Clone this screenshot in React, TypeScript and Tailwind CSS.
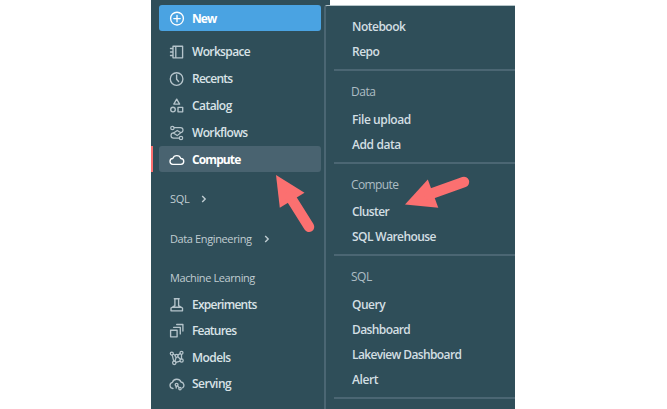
import type { ReactNode } from "react";

function Icon({ children, className = "text-[#b5c4cb]" }: { children: ReactNode; className?: string }) {
  return (
    <svg
      viewBox="0 0 16 16"
      fill="none"
      stroke="currentColor"
      strokeWidth="1.35"
      strokeLinejoin="round"
      strokeLinecap="round"
      className={`size-4 shrink-0 ${className}`}
    >
      {children}
    </svg>
  );
}

const icons: Record<string, ReactNode> = {
  workspace: <path d="M4 2.2h9.6v11.6H4zM6.8 2.2v11.6M1.5 4.5H4M1.5 8H4M1.5 11.5H4" />,
  recents: (
    <>
      <circle cx="7.6" cy="8" r="6.3" />
      <path d="M7.6 4v4.2l2 2.3" />
    </>
  ),
  catalog: (
    <>
      <path d="M7.7 1.2l2.9 4.9H4.8zM9 9.3h4.7v4.5H9z" />
      <circle cx="4" cy="11.5" r="2.3" />
    </>
  ),
  workflows: (
    <g strokeWidth="1.2">
      <circle cx="3.4" cy="3" r="1.7" />
      <circle cx="12" cy="13" r="1.7" />
      <path d="M5.1 2.6h6.4a2.5 2.5 0 010 5L8.2 5.4 4.6 7.9a2.6 2.6 0 000 5.2h5.6M4.4 8l3.8 2.6 3.6-2.9" />
    </g>
  ),
  experiments: <path d="M5.3 1.7h4.9M5.9 1.7v7L2 11v2.800h11.500V11L9.600 8.700v-7M3.800 10.200h7.900" />,
  features: <path d="M1.6 7.2h6.5v6.600H1.600zM4.600 4.300h6.700v6.600M7.700 1.500h6.200v6.600" />,
  models: (
    <g strokeWidth="1.25">
      <circle cx="2.8" cy="3.600" r="1.500" />
      <circle cx="12.500" cy="2.800" r="1.500" />
      <circle cx="7.600" cy="5.800" r="1.500" />
      <circle cx="12.600" cy="10.500" r="1.600" />
      <circle cx="5.300" cy="12.800" r="1.700" />
      <path d="M4.300 4.300l1.800.9M8.900 5l2.300-1.400M3.200 5l1.500 6.200M7.200 7.300l-1.300 3.900M8.800 6.800l2.600 2.500M12.500 4.300v4.600M7 12.300l4.100-1.200" />
    </g>
  ),
  serving: (
    <>
      <path d="M4 12.500a3.100 3.100 0 01-.6-6.100A4.600 4.600 0 0112 6a3.300 3.300 0 011.700 5.800" />
      <circle cx="7.600" cy="8.800" r="1.400" />
      <circle cx="11" cy="12.600" r="1.200" />
      <path d="M8.600 9.900l1.500 1.700M7.200 10.300v1.700" />
    </>
  ),
};

function NavRow({ icon, label, tracking }: { icon: string; label: string; tracking: string }) {
  return (
    <div className="flex h-[27px] items-center gap-[7px] pl-[18px] text-[#d9e3e7]">
      <Icon>{icons[icon]}</Icon>
      <span className={`font-semibold ${tracking}`}>{label}</span>
    </div>
  );
}

function Chevron() {
  return (
    <svg viewBox="0 0 6 8" className="h-2 w-1.5" fill="none" stroke="#c0cdd2" strokeWidth="1.4">
      <path d="M1.2 1l3 3-3 3" />
    </svg>
  );
}

function MenuItem({ label, tracking }: { label: string; tracking: string }) {
  return <div className={`h-[25px] pl-[18px] font-semibold leading-[25px] text-[#d3dfe3] ${tracking}`}>{label}</div>;
}

function MenuHeading({ label, tracking }: { label: string; tracking: string }) {
  return <div className={`h-[26px] pl-[17px] leading-[26px] text-[#adbdc4] ${tracking}`}>{label}</div>;
}

function Divider() {
  return <div className="h-0.5 bg-[#4b6673]" />;
}

export default function App() {
  return (
    <div className="relative h-[409px] w-[667px] overflow-hidden bg-white font-['Open_Sans','Noto_Sans',sans-serif] text-[12px] whitespace-nowrap">
      <div className="flex h-full pl-[151px]">
        <nav className="h-full w-[173px] bg-[#2f4e59] pt-[5px]">
          <div className="ml-2 flex h-[26px] w-[162px] items-center gap-[7px] rounded-[3px] bg-[#4aa3e2] pt-px pl-2.5 text-white">
            <Icon className="text-white">
              <circle cx="8" cy="7.6" r="6.4" />
              <path d="M8 4.400v6.400M4.800 7.600h6.400" />
            </Icon>
            <span className="font-bold tracking-[-0.9px]">New</span>
          </div>
          <div className="pt-[7px]">
            <NavRow icon="workspace" label="Workspace" tracking="tracking-[-0.65px]" />
            <NavRow icon="recents" label="Recents" tracking="tracking-[-0.75px]" />
            <NavRow icon="catalog" label="Catalog" tracking="tracking-[-0.55px]" />
            <NavRow icon="workflows" label="Workflows" tracking="tracking-[-0.65px]" />
          </div>
          <div className="flex h-[26px]">
            <div className="mr-1.5 w-0.5 bg-[#fb7070]" />
            <div className="flex w-[162px] items-center gap-[7px] rounded-[3px] bg-[#496370] pt-px pl-2.5 text-white">
              <Icon className="text-white">
                <path d="M4 12.300a2.900 2.900 0 01-.2-5.800 4.200 4.200 0 018 0 2.900 2.900 0 01.1 5.800z" />
              </Icon>
              <span className="font-bold tracking-[-0.9px]">Compute</span>
            </div>
          </div>
          <div className="mt-[17px] flex h-5 items-center gap-3 pl-[19px] text-[11px] text-[#c0cdd2]">
            <span className="tracking-[-0.3px]">SQL</span>
            <Chevron />
          </div>
          <div className="mt-5 flex h-5 items-center gap-3 pl-[19px] text-[11px] text-[#c0cdd2]">
            <span className="tracking-[-0.38px]">Data Engineering</span>
            <Chevron />
          </div>
          <div className="mt-[19px] flex h-5 items-center pl-[19px] text-[11px] text-[#c0cdd2]">
            <span className="tracking-[-0.4px]">Machine Learning</span>
          </div>
          <div className="mt-[3px] flex flex-col -space-y-[0.4px]">
            <NavRow icon="experiments" label="Experiments" tracking="tracking-[-0.75px]" />
            <NavRow icon="features" label="Features" tracking="tracking-[-0.8px]" />
            <NavRow icon="models" label="Models" tracking="tracking-[-0.55px]" />
            <NavRow icon="serving" label="Serving" tracking="tracking-[-0.5px]" />
          </div>
        </nav>
        <div className="flex h-full w-[191px] flex-col">
          <div className="h-[5px] w-[5.5px] shrink-0 bg-[#2f4e59]" />
          <div className="bg-[#2f4e59]">
            <section className="h-[404px] rounded-tl-[3px] border-t border-l-2 border-t-[#b7c6ca] border-l-[#4b6673] bg-[#2f4e59] pl-2">
              <div className="pt-2 pb-[5px]">
                <MenuItem label="Notebook" tracking="tracking-[-0.5px]" />
                <MenuItem label="Repo" tracking="tracking-[-0.5px]" />
              </div>
              <Divider />
              <div className="pt-2 pb-[5px]">
                <MenuHeading label="Data" tracking="tracking-[-0.5px]" />
                <div className="h-0.5" />
                <MenuItem label="File upload" tracking="tracking-[-0.4px]" />
                <MenuItem label="Add data" tracking="tracking-[-0.4px]" />
              </div>
              <Divider />
              <div className="pt-2 pb-[5px]">
                <MenuHeading label="Compute" tracking="tracking-[-0.6px]" />
                <div className="h-px" />
                <MenuItem label="Cluster" tracking="tracking-[-0.6px]" />
                <MenuItem label="SQL Warehouse" tracking="tracking-[-0.58px]" />
              </div>
              <Divider />
              <div className="pt-2 pb-[5px]">
                <MenuHeading label="SQL" tracking="tracking-[-0.5px]" />
                <div className="h-0.5" />
                <MenuItem label="Query" tracking="tracking-[-0.5px]" />
                <MenuItem label="Dashboard" tracking="tracking-[-0.6px]" />
                <MenuItem label="Lakeview Dashboard" tracking="tracking-[-0.62px]" />
                <MenuItem label="Alert" tracking="tracking-[-0.4px]" />
              </div>
              <Divider />
            </section>
          </div>
        </div>
      </div>
      <svg viewBox="0 0 667 409" className="pointer-events-none absolute inset-0 h-full w-full" fill="#fb7070" stroke="#fb7070">
        <path d="M276 175l28.5 17.8-24.7 15z" stroke="none" />
        <path d="M290 196.500L309 226.800" strokeWidth="10.500" strokeLinecap="round" />
        <path d="M405 204.500l22.800-25 10.500 28.200z" stroke="none" />
        <path d="M429 194.500L464 182" strokeWidth="10.500" strokeLinecap="round" />
      </svg>
    </div>
  );
}
